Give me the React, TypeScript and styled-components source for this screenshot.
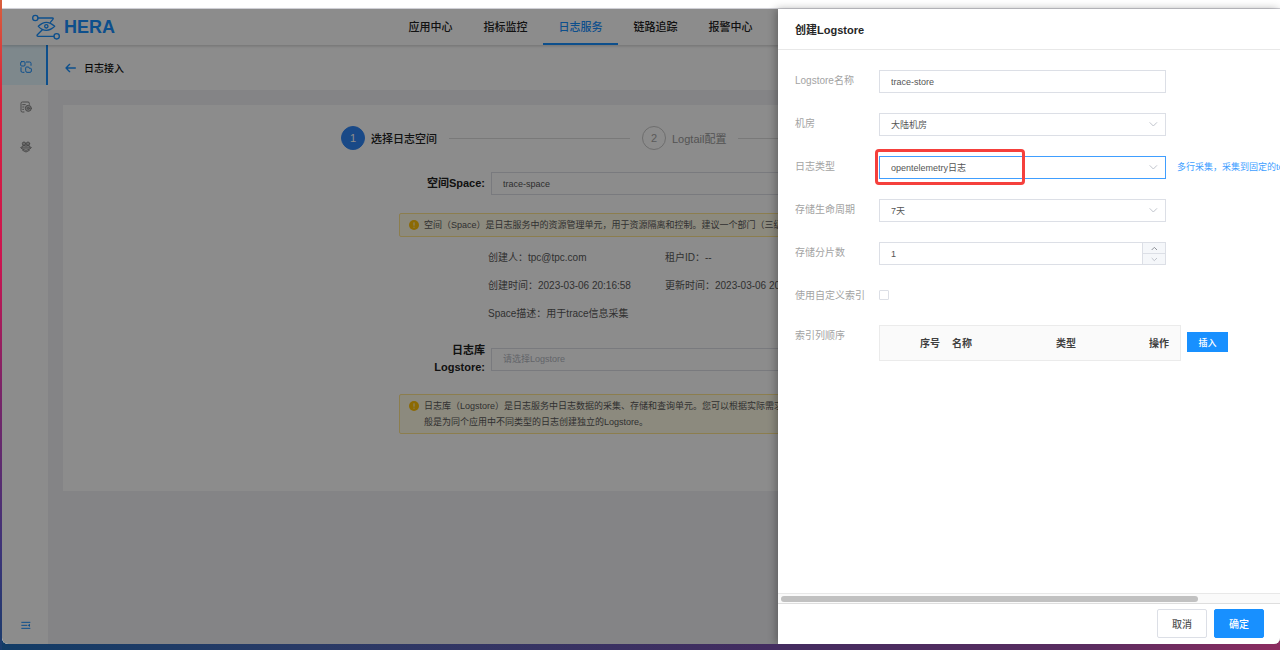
import React from "react";
import styled, { createGlobalStyle, css } from "styled-components";

const BLUE = "#1890ff";

const GlobalStyle = createGlobalStyle`
  *, *::before, *::after { box-sizing: border-box; }
  body {
    margin: 0;
    font-family: "Liberation Sans", "Noto Sans CJK SC", sans-serif;
    font-size: 10px;
    color: #333;
  }
  button, input, select { font-family: inherit; margin: 0; }
  h1, h2, p, dl, dd, dt { margin: 0; font-size: inherit; font-weight: inherit; }
`;

const Desktop = styled.div`
  min-height: 100vh;
  display: flex;
  padding: 0 0 6px 2px;
  overflow: hidden;
  background:
    linear-gradient(180deg, #d8603c 0%, #d8203c 15%, #cc1450 40%, #7a2468 60%, #3c3478 85%, #1a3c6c 100%) left top / 2px 100% no-repeat,
    linear-gradient(90deg, #123c66 0%, #2a3a66 25%, #432c60 60%, #5a2c60 85%, #8c2c60 100%);
`;

const BrowserWindow = styled.div`
  flex: 1;
  min-width: 0;
  display: flex;
  flex-direction: column;
  border-radius: 0 0 6px 6px;
  overflow: hidden;
  background: #fff;
`;

const BrowserBar = styled.div`
  height: 9px;
  border-bottom: 1px solid #d6d6dc;
`;

const Viewport = styled.div`
  position: relative;
  flex: 1;
  display: flex;
  flex-direction: column;
`;

const Header = styled.header`
  position: relative;
  height: 36px;
  display: flex;
  align-items: stretch;
  background: #fff;
  box-shadow: 0 1px 3px rgba(0, 0, 0, 0.2);
  z-index: 1;
`;

const Brand = styled.a`
  width: 391px;
  padding-left: 30px;
  display: flex;
  align-items: center;
  gap: 4px;
  color: ${BLUE};
  font-size: 18px;
  font-weight: 700;
  text-decoration: none;
`;

const Nav = styled.nav`
  display: flex;
`;

const NavLink = styled.a<{ $active?: boolean }>`
  width: 75px;
  display: flex;
  align-items: center;
  justify-content: center;
  font-size: 11px;
  font-weight: 500;
  text-decoration: none;
  color: ${(p) => (p.$active ? BLUE : "#222")};
  border-bottom: 2px solid ${(p) => (p.$active ? BLUE : "transparent")};
`;

const Shell = styled.div`
  flex: 1;
  display: flex;
`;

const Sidebar = styled.aside`
  width: 46px;
  display: flex;
  flex-direction: column;
  background: #fff;
`;

const SideItem = styled.button<{ $active?: boolean }>`
  height: 40px;
  padding: 3px 0 0 4px;
  border: 0;
  border-right: 2px solid ${(p) => (p.$active ? BLUE : "transparent")};
  background: ${(p) => (p.$active ? "#e6f7ff" : "none")};
  color: ${(p) => (p.$active ? BLUE : "#888")};
  display: flex;
  align-items: center;
  justify-content: center;
`;

const FoldButton = styled(SideItem)`
  margin-top: auto;
  color: ${BLUE};
`;

const Main = styled.main`
  flex: 1;
  min-width: 0;
  background: #f0f0f5;
`;

const PageHead = styled.div`
  height: 45px;
  padding-left: 17px;
  display: flex;
  align-items: center;
  gap: 8px;
  background: #fff;
`;

const BackLink = styled.a`
  display: flex;
  color: ${BLUE};
`;

const PageTitle = styled.h1`
  font-size: 10px;
  font-weight: 500;
  color: #111;
`;

const Card = styled.section`
  margin: 15px;
  padding: 21px 0 50px;
  background: #fff;
`;

const Steps = styled.ol`
  list-style: none;
  display: flex;
  gap: 12px;
  width: 662px;
  margin: 0 auto 22px;
  padding: 0 0 0 8px;
`;

const Step = styled.li<{ $last?: boolean; $active?: boolean }>`
  flex: ${(p) => (p.$last ? "none" : "1")};
  display: flex;
  align-items: center;
  gap: 6px;
  font-size: 11px;
  font-weight: ${(p) => (p.$active ? 500 : 400)};
  color: ${(p) => (p.$active ? "#222" : "#999")};
  white-space: nowrap;
  ${(p) =>
    !p.$last &&
    css`
      &::after {
        content: "";
        flex: 1;
        height: 1px;
        margin-left: 6px;
        background: #dcdcdc;
      }
    `}
`;

const StepDot = styled.span<{ $active?: boolean }>`
  width: 24px;
  height: 24px;
  border-radius: 50%;
  border: 1px solid ${(p) => (p.$active ? "#2f86f6" : "#c8c8c8")};
  background: ${(p) => (p.$active ? "#2f86f6" : "#fff")};
  color: ${(p) => (p.$active ? "#fff" : "#a6a6a6")};
  display: flex;
  align-items: center;
  justify-content: center;
  font-weight: 400;
`;

const SpaceForm = styled.div`
  width: 530px;
  margin: 0 auto;
`;

const SpaceRow = styled.div`
  display: flex;
  align-items: center;
  gap: 6px;
`;

const SpaceLabel = styled.label`
  flex: none;
  width: 86px;
  padding-left: 6px;
  text-align: right;
  font-size: 11px;
  line-height: 17px;
  font-weight: 700;
  color: #222;
`;

const textField = css`
  width: 100%;
  height: 23px;
  padding: 0 11px;
  border: 1px solid #dcdfe6;
  border-radius: 0;
  background: #fff;
  font-size: 9px;
  color: #555;
  outline: none;
  &::placeholder { color: #b4b8bf; }
`;

const TextInput = styled.input`
  ${textField}
`;

const Alert = styled.div`
  margin: 18px 0 7px;
  padding: 3px 9px;
  display: flex;
  gap: 5px;
  border: 1px solid #ffe58f;
  border-radius: 2px;
  background: #fffbe6;
  font-size: 9px;
  line-height: 16px;
  color: #595959;
  svg { flex: none; margin-top: 3px; }
`;

const AlertText = styled.p`
  white-space: nowrap;
`;

const Facts = styled.dl`
  margin-bottom: 14px;
  padding-left: 89px;
  display: grid;
  grid-template-columns: 177px 1fr;
  line-height: 28px;
  color: #595959;
`;

const Fact = styled.div`
  display: flex;
`;

const Mask = styled.div`
  position: absolute;
  inset: 0;
  z-index: 2;
  background: rgba(0, 0, 0, 0.45);
`;

const Drawer = styled.section`
  position: absolute;
  z-index: 3;
  top: 0;
  right: 0;
  bottom: 0;
  width: 502px;
  display: flex;
  flex-direction: column;
  background: #fff;
  box-shadow: -2px 0 8px rgba(0, 0, 0, 0.3);
`;

const DrawerHead = styled.header`
  height: 41px;
  padding: 0 17px;
  display: flex;
  align-items: center;
  border-bottom: 1px solid #e8e8e8;
`;

const DrawerTitle = styled.h2`
  font-size: 11px;
  font-weight: 700;
  color: #262626;
`;

const DrawerBody = styled.div`
  flex: 1;
  overflow: hidden;
  padding: 20px 0 0 17px;
  display: flex;
  flex-direction: column;
  gap: 20px;
`;

const Field = styled.div`
  display: flex;
  align-items: flex-start;
  color: #a3a3a3;
`;

const FieldLabel = styled.label`
  flex: none;
  width: 84px;
  padding-top: 2px;
  line-height: 18px;
`;

const Control = styled.div`
  position: relative;
  flex: none;
  width: 287px;
  display: flex;
`;

const Select = styled.select<{ $focused?: boolean }>`
  ${textField}
  appearance: none;
  border-color: ${(p) => (p.$focused ? "#409eff" : "#dcdfe6")};
`;

const SelectArrow = styled.svg`
  position: absolute;
  right: 8px;
  top: 8px;
  pointer-events: none;
`;

const Highlight = styled.div`
  position: absolute;
  left: -4px;
  top: -7px;
  width: 150px;
  height: 36px;
  border: 3px solid #f5403c;
  border-radius: 4px;
  pointer-events: none;
`;

const Hint = styled.a`
  margin-left: 11px;
  font-size: 9px;
  line-height: 23px;
  color: #409eff;
  white-space: nowrap;
  text-decoration: none;
`;

const NumberInput = styled(TextInput)`
  flex: 1;
  min-width: 0;
  border-right: 0;
  appearance: textfield;
  &::-webkit-inner-spin-button { appearance: none; }
`;

const Spinner = styled.div`
  width: 24px;
  display: flex;
  flex-direction: column;
  border: 1px solid #dcdfe6;
  background: #f5f7fa;
`;

const SpinButton = styled.button<{ $muted?: boolean }>`
  flex: 1;
  padding: 0;
  border: 0;
  background: none;
  color: ${(p) => (p.$muted ? "#c0c4cc" : "#909399")};
  display: flex;
  align-items: center;
  justify-content: center;
  & + & { border-top: 1px solid #dcdfe6; }
`;

const Checkbox = styled.input`
  appearance: none;
  width: 10px;
  height: 10px;
  margin-top: 5px;
  border: 1px solid #dcdfe6;
  border-radius: 1px;
  background: #fff;
`;

const ColumnTable = styled.table`
  width: 302px;
  table-layout: fixed;
  border: 1px solid #ebebeb;
  border-spacing: 0;
  background: #fafafa;
`;

const ColumnHead = styled.th<{ $width?: number }>`
  width: ${(p) => (p.$width ? `${p.$width}px` : "auto")};
  height: 34px;
  padding: 0 0 2px 6px;
  text-align: left;
  font-size: 10px;
  font-weight: 700;
  color: #404040;
`;

const Button = styled.button<{ $primary?: boolean }>`
  width: 50px;
  height: 29px;
  padding: 0;
  border: 1px solid ${(p) => (p.$primary ? BLUE : "#dcdfe6")};
  border-radius: 2px;
  background: ${(p) => (p.$primary ? BLUE : "#fff")};
  color: ${(p) => (p.$primary ? "#fff" : "#555")};
  font-size: 10px;
  font-weight: 500;
`;

const InsertButton = styled(Button)`
  width: 41px;
  height: 20px;
  margin: 7px 0 0 6px;
  border-radius: 0;
  font-size: 9px;
`;

const ScrollTrack = styled.div`
  height: 10px;
  padding: 2px 3px;
  border-top: 1px solid #e8e8e8;
  background: #fafafa;
`;

const ScrollThumb = styled.div`
  width: 84%;
  height: 6px;
  border-radius: 3px;
  background: #c1c1c1;
`;

const DrawerFoot = styled.footer`
  height: 41px;
  padding: 0 16px 1px 0;
  display: flex;
  align-items: center;
  justify-content: flex-end;
  gap: 7px;
  border-top: 1px solid #dedede;
`;

const Logo = () => (
  <svg width="28" height="26" viewBox="0 0 84 78" fill="none" stroke="currentColor" strokeWidth="4" strokeLinejoin="round" strokeLinecap="round">
    <circle cx="10" cy="12" r="8" />
    <path d="M18 12H61Q66 12 62 17L55 25" />
    <path d="M19 37Q31 25 43 25T68 37Q56 49 43 49T19 37Z" />
    <circle cx="43" cy="37" r="5" />
    <path d="M31 47L16 62Q13 67 19 67H66" />
    <circle cx="74" cy="67" r="8" />
  </svg>
);

const BlocksIcon = () => (
  <svg width="12" height="12" viewBox="0 0 36 36" fill="none" stroke="currentColor" strokeWidth="3" strokeLinecap="round">
    <rect x="2" y="2" width="13" height="13" rx="3" />
    <path d="M19 3h10q4 0 4 4v6" />
    <path d="M3 20v10q0 4 4 4h5" />
    <path d="M17 20q0-2 3-2h6l2 4h4q2 0 2 2v6q0 4-4 4h-9q-4 0-4-4z" />
  </svg>
);

const LogGearIcon = () => (
  <svg width="12" height="12" viewBox="0 0 36 36" fill="none" stroke="currentColor" strokeWidth="3" strokeLinecap="round">
    <path d="M12 33H7q-4 0-4-4V7q0-4 4-4h17q4 0 4 4v3" />
    <path d="M8 11h8M8 18h4M8 25h3" />
    <circle cx="25" cy="22" r="9" fill="currentColor" fillOpacity="0.4" />
    <circle cx="25" cy="22" r="3" />
  </svg>
);

const TeamIcon = () => (
  <svg width="12" height="12" viewBox="0 0 36 36" fill="none" stroke="currentColor" strokeWidth="3" strokeLinecap="round" strokeLinejoin="round">
    <g fill="currentColor" fillOpacity="0.45">
      <circle cx="12" cy="8" r="5" />
      <circle cx="24" cy="8" r="5" />
      <path d="M5 20q0-7 7-7 4 0 6 3 2-3 6-3 7 0 7 7z" />
    </g>
    <path d="M2 20l6 5 10 3 10-3 6-5M8 28l10 5 10-5" />
  </svg>
);

const FoldIcon = () => (
  <svg width="10" height="9" viewBox="0 0 30 27" fill="none" stroke="currentColor" strokeWidth="3">
    <path d="M1 4h27M1 13h18M1 22h27" />
    <path d="M27 8v10l-7-5z" fill="currentColor" stroke="none" />
  </svg>
);

const BackIcon = () => (
  <svg width="11" height="10" viewBox="0 0 33 30" fill="none" stroke="currentColor" strokeWidth="4" strokeLinecap="round" strokeLinejoin="round">
    <path d="M31 15H3M14 4L3 15l11 11" />
  </svg>
);

const WarnIcon = () => (
  <svg width="10" height="10" viewBox="0 0 30 30">
    <circle cx="15" cy="15" r="15" fill="#ffc107" />
    <path d="M15 7v10M15 20v3" stroke="#fffbe6" strokeWidth="3" />
  </svg>
);

const Chevron = ({ up }: { up?: boolean }) => (
  <svg width="7" height="5" viewBox="0 0 21 15" fill="none" stroke="currentColor" strokeWidth="3">
    <path d={up ? "M2 12l8-8 8 8" : "M2 3l8 8 8-8"} />
  </svg>
);

const navItems = ["应用中心", "指标监控", "日志服务", "链路追踪", "报警中心"];

const facts = [
  ["创建人：", "tpc@tpc.com"],
  ["租户ID：", "--"],
  ["创建时间：", "2023-03-06 20:16:58"],
  ["更新时间：", "2023-03-06 20:16:58"],
  ["Space描述：", "用于trace信息采集"],
];

interface SelectFieldProps {
  id: string;
  label: string;
  value: string;
  focused?: boolean;
  hint?: string;
}

const SelectField = ({ id, label, value, focused, hint }: SelectFieldProps) => (
  <Field>
    <FieldLabel htmlFor={id}>{label}</FieldLabel>
    <Control>
      <Select id={id} $focused={focused} defaultValue={value}>
        <option>{value}</option>
      </Select>
      <SelectArrow width="9" height="7" viewBox="0 0 27 21" fill="none" stroke="#c0c4cc" strokeWidth="3">
        <path d="M2 4l11 11L24 4" />
      </SelectArrow>
      {focused && <Highlight />}
    </Control>
    {hint && <Hint href="#hint">{hint}</Hint>}
  </Field>
);

export default function App() {
  return (
    <Desktop>
      <GlobalStyle />
      <BrowserWindow>
        <BrowserBar />
        <Viewport>
          <Header>
            <Brand href="#home">
              <Logo />
              HERA
            </Brand>
            <Nav>
              {navItems.map((item) => (
                <NavLink key={item} href="#nav" $active={item === "日志服务"}>
                  {item}
                </NavLink>
              ))}
            </Nav>
          </Header>
          <Shell>
            <Sidebar>
              <SideItem $active aria-label="日志接入"><BlocksIcon /></SideItem>
              <SideItem aria-label="日志配置"><LogGearIcon /></SideItem>
              <SideItem aria-label="成员管理"><TeamIcon /></SideItem>
              <FoldButton aria-label="收起菜单"><FoldIcon /></FoldButton>
            </Sidebar>
            <Main>
              <PageHead>
                <BackLink href="#back" aria-label="返回"><BackIcon /></BackLink>
                <PageTitle>日志接入</PageTitle>
              </PageHead>
              <Card>
                <Steps>
                  <Step $active><StepDot $active>1</StepDot>选择日志空间</Step>
                  <Step><StepDot>2</StepDot>Logtail配置</Step>
                  <Step $last><StepDot>3</StepDot>完成</Step>
                </Steps>
                <SpaceForm>
                  <SpaceRow>
                    <SpaceLabel htmlFor="space">空间Space:</SpaceLabel>
                    <TextInput id="space" defaultValue="trace-space" />
                  </SpaceRow>
                  <Alert>
                    <WarnIcon />
                    <AlertText>空间（Space）是日志服务中的资源管理单元，用于资源隔离和控制。建议一个部门（三级）创建一个空间。</AlertText>
                  </Alert>
                  <Facts>
                    {facts.map(([name, value]) => (
                      <Fact key={name}>
                        <dt>{name}</dt>
                        <dd>{value}</dd>
                      </Fact>
                    ))}
                  </Facts>
                  <SpaceRow>
                    <SpaceLabel htmlFor="logstore">日志库 Logstore:</SpaceLabel>
                    <TextInput id="logstore" placeholder="请选择Logstore" />
                  </SpaceRow>
                  <Alert>
                    <WarnIcon />
                    <AlertText>
                      日志库（Logstore）是日志服务中日志数据的采集、存储和查询单元。您可以根据实际需求在空间下创建多个日志库，一
                      <br />
                      般是为同个应用中不同类型的日志创建独立的Logstore。
                    </AlertText>
                  </Alert>
                </SpaceForm>
              </Card>
            </Main>
          </Shell>
          <Mask />
          <Drawer>
            <DrawerHead>
              <DrawerTitle>创建Logstore</DrawerTitle>
            </DrawerHead>
            <DrawerBody>
              <Field>
                <FieldLabel htmlFor="name">Logstore名称</FieldLabel>
                <Control>
                  <TextInput id="name" defaultValue="trace-store" />
                </Control>
              </Field>
              <SelectField id="region" label="机房" value="大陆机房" />
              <SelectField id="type" label="日志类型" value="opentelemetry日志" focused hint="多行采集，采集到固定的topic" />
              <SelectField id="period" label="存储生命周期" value="7天" />
              <Field>
                <FieldLabel htmlFor="shards">存储分片数</FieldLabel>
                <Control>
                  <NumberInput id="shards" type="number" defaultValue={1} />
                  <Spinner>
                    <SpinButton aria-label="增加"><Chevron up /></SpinButton>
                    <SpinButton aria-label="减少" $muted><Chevron /></SpinButton>
                  </Spinner>
                </Control>
              </Field>
              <Field>
                <FieldLabel htmlFor="custom">使用自定义索引</FieldLabel>
                <Checkbox id="custom" type="checkbox" />
              </Field>
              <Field>
                <FieldLabel as="span">索引列顺序</FieldLabel>
                <ColumnTable>
                  <thead>
                    <tr>
                      <ColumnHead as="td" $width={34} />
                      <ColumnHead $width={32}>序号</ColumnHead>
                      <ColumnHead $width={104}>名称</ColumnHead>
                      <ColumnHead $width={93}>类型</ColumnHead>
                      <ColumnHead>操作</ColumnHead>
                    </tr>
                  </thead>
                </ColumnTable>
                <InsertButton $primary>插入</InsertButton>
              </Field>
            </DrawerBody>
            <ScrollTrack>
              <ScrollThumb />
            </ScrollTrack>
            <DrawerFoot>
              <Button>取消</Button>
              <Button $primary>确定</Button>
            </DrawerFoot>
          </Drawer>
        </Viewport>
      </BrowserWindow>
    </Desktop>
  );
}
